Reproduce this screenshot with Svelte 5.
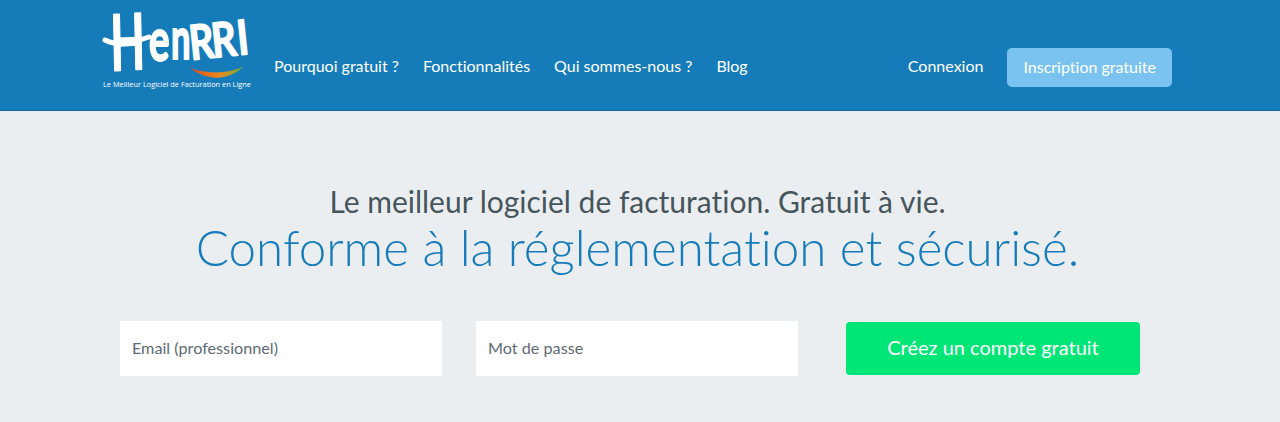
<script>
  const links = ["Pourquoi gratuit ?", "Fonctionnalités", "Qui sommes-nous ?", "Blog"];
</script>

<header class="top">
  <a class="logo" href="#top" aria-label="Henrri">
    <svg viewBox="0 0 150 80" width="150" height="80">
      <g class="mark">
        <text class="big" transform="translate(8 60) scale(0.62 1.08) rotate(-2)">H</text>
        <text class="word" transform="translate(46 50) scale(0.8 1.25)">e</text>
        <text class="word" transform="translate(68 48) scale(0.72 1.2)">n</text>
        <text class="word" transform="translate(88 49) rotate(-6) scale(0.8 1)" x="0 28 60">RRI</text>
      </g>
      <path class="bar" d="M2 29 C14 36 32 31 46 26" />
      <path d="M87 57 C104 63 124 63 140 56 C125 70 104 70 87 57Z" fill="url(#swoosh)" />
      <defs>
        <linearGradient id="swoosh" x1="0" x2="1" y1="0" y2="0">
          <stop offset="0" stop-color="#d9481f" />
          <stop offset="0.55" stop-color="#ee8a1c" />
          <stop offset="1" stop-color="#6fae3a" />
        </linearGradient>
      </defs>
      <text x="0" y="76" class="tag" textLength="148" lengthAdjust="spacingAndGlyphs">Le Meilleur Logiciel de Facturation en Ligne</text>
    </svg>
  </a>
  <nav class="links">
    {#each links as link}
      <a href="#top">{link}</a>
    {/each}
  </nav>
  <div class="account">
    <a class="login" href="#top">Connexion</a>
    <a class="signup" href="#top">Inscription gratuite</a>
  </div>
</header>

<main class="hero">
  <h1>Le meilleur logiciel de facturation. Gratuit à vie.</h1>
  <h2>Conforme à la réglementation et sécurisé.</h2>
  <form class="signup-form" on:submit|preventDefault>
    <input type="email" placeholder="Email (professionnel)" />
    <input type="password" placeholder="Mot de passe" />
    <button type="submit">Créez un compte gratuit</button>
  </form>
</main>

<style>
  :global(body) {
    background: #ebeef1;
    font-family: Lato, "Open Sans", sans-serif;
    font-variant-ligatures: none;
    overflow: hidden;
  }

  .top {
    display: flex;
    align-items: center;
    box-sizing: border-box;
    height: 111px;
    padding: 24px 108px 0 103px;
    background: #167cb9;
    border-bottom: 1px solid #12699e;
    color: #fff;
  }
  .top a {
    color: #fff;
    text-decoration: none;
    font-size: 16px;
  }

  .logo {
    display: block;
    width: 150px;
    height: 80px;
    margin: -24px 21px 8px 0;
  }
  .logo svg {
    display: block;
    overflow: visible;
  }
  .mark text {
    fill: #fff;
    stroke: #fff;
    stroke-linejoin: round;
    font-family: Lato, sans-serif;
    font-weight: 700;
  }
  .big { font-size: 72px; stroke-width: 1.5px; }
  .word { font-size: 48px; stroke-width: 1.5px; }
  .bar {
    fill: none;
    stroke: #fff;
    stroke-width: 5px;
    stroke-linecap: round;
  }
  .tag {
    fill: #fff;
    font-family: "Open Sans", sans-serif;
    font-size: 7.2px;
  }

  .links {
    display: flex;
    gap: 24px;
    margin-bottom: 4px;
  }

  .account {
    display: flex;
    align-items: center;
    gap: 24px;
    margin-left: auto;
  }
  .top .login { margin-bottom: 4px; }
  .top .signup {
    display: block;
    padding: 9px 16px 11px;
    border-radius: 5px;
    background: #7ac3f0;
  }

  .hero {
    display: flex;
    flex-direction: column;
    align-items: center;
    padding: 72px 0 0;
  }
  h1 {
    margin: 0 5px 0 0;
    font-size: 30px;
    font-weight: 400;
    line-height: 36px;
    color: #46555b;
  }
  h2 {
    margin: 0 5px 0 0;
    font-size: 49.3px;
    font-weight: 300;
    line-height: 56px;
    color: #167cb9;
  }

  .signup-form {
    display: flex;
    align-items: center;
    align-self: stretch;
    margin: 46px 140px 0 120px;
  }
  input {
    box-sizing: border-box;
    width: 322px;
    height: 55px;
    margin-right: 34px;
    padding: 0 12px 2px;
    border: 0;
    border-radius: 0;
    background: #fff;
    font: 16.2px Lato, "Open Sans", sans-serif;
    font-variant-ligatures: none;
  }
  input::placeholder {
    color: #5d6a72;
    opacity: 1;
  }
  button {
    width: 294px;
    height: 53px;
    margin-left: 14px;
    padding: 0 0 4px;
    border: 0;
    border-radius: 4px;
    background: #00e676;
    color: #fff;
    font: 20px Lato, "Open Sans", sans-serif;
    font-variant-ligatures: none;
  }
</style>
